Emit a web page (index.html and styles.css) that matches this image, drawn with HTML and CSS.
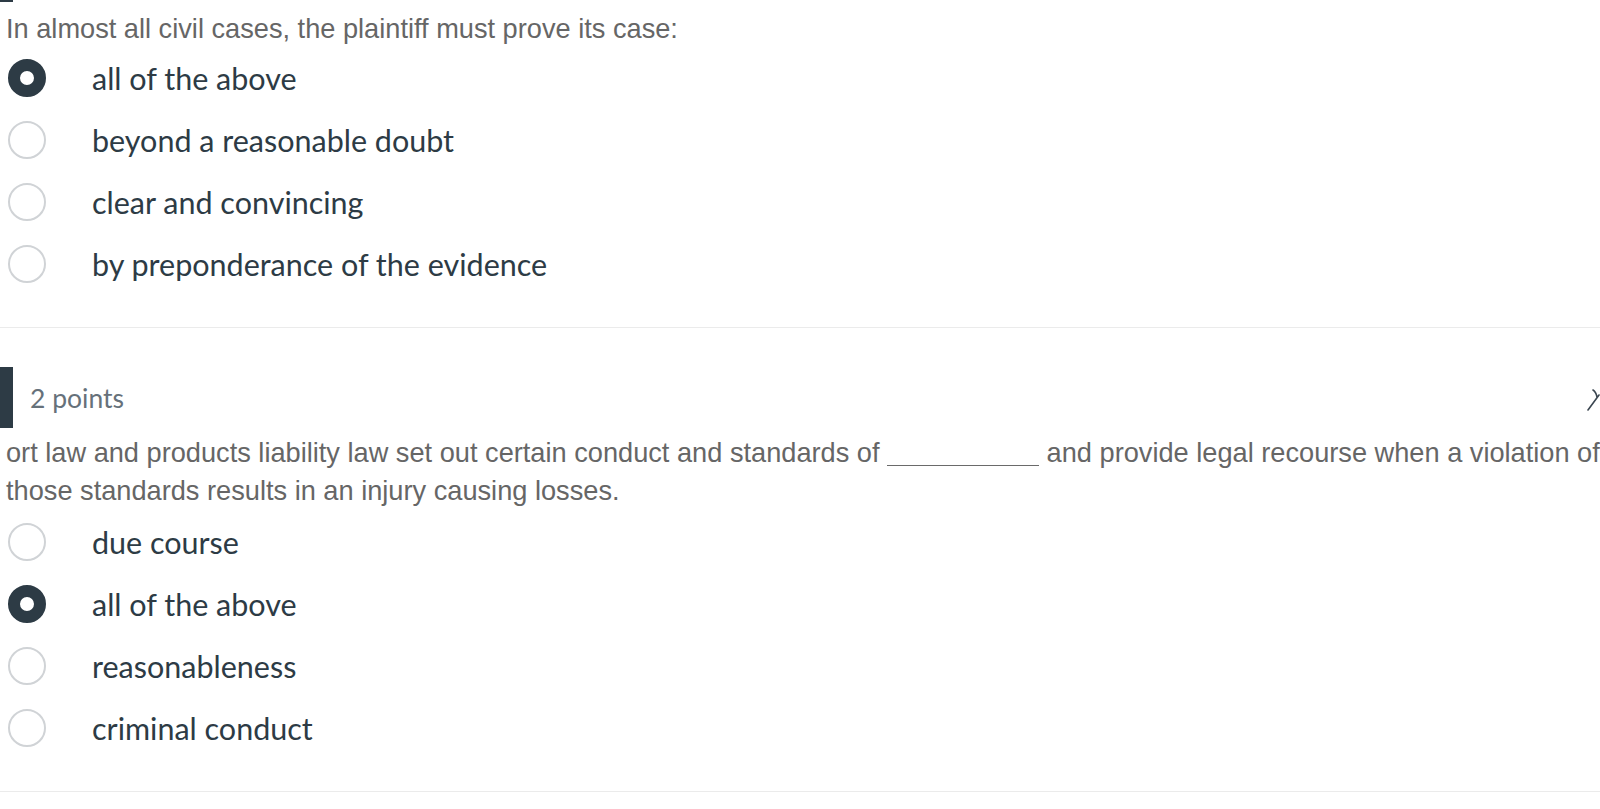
FILE: index.html
```html
<!DOCTYPE html>
<html lang="en">
<head>
<meta charset="utf-8">
<title>Quiz</title>
<link rel="stylesheet" href="styles.css">
</head>
<body>
<div class="prev-marker"></div>

<section class="question">
  <p class="q-text">In almost all civil cases, the plaintiff must prove its case:</p>
  <ul class="options">
    <li class="option is-selected"><span class="radio"></span><span class="label">all of the above</span></li>
    <li class="option"><span class="radio"></span><span class="label">beyond a reasonable doubt</span></li>
    <li class="option"><span class="radio"></span><span class="label">clear and convincing</span></li>
    <li class="option"><span class="radio"></span><span class="label">by preponderance of the evidence</span></li>
  </ul>
</section>

<hr class="divider">

<section class="question">
  <header class="q-header">
    <span class="marker"></span>
    <span class="points">2 points</span>
    <svg class="pin" width="20" height="26" viewBox="0 0 20 26" aria-hidden="true">
      <path d="M8 3 Q11 5 12 10 M14 8 L3 23" fill="none" stroke="#3b4650" stroke-width="1.6" stroke-linecap="round"/>
    </svg>
  </header>
  <p class="q-text q-text-2">ort law and products liability law set out certain conduct and standards of <span class="blank"></span> and provide legal recourse when a violation of<br>those standards results in an injury causing losses.</p>
  <ul class="options options-2">
    <li class="option"><span class="radio"></span><span class="label">due course</span></li>
    <li class="option is-selected"><span class="radio"></span><span class="label">all of the above</span></li>
    <li class="option"><span class="radio"></span><span class="label">reasonableness</span></li>
    <li class="option"><span class="radio"></span><span class="label">criminal conduct</span></li>
  </ul>
</section>

<hr class="divider divider-last">
</body>
</html>
```

FILE: styles.css
```css
html, body {
  margin: 0;
  padding: 0;
  background: #ffffff;
  overflow: hidden;
}

body {
  width: 1600px;
  height: 809px;
  font-family: "Liberation Sans", Arial, sans-serif;
}

.prev-marker {
  width: 13px;
  height: 2px;
  background: #2d3b45;
}

.question {
  position: relative;
}

.q-text {
  margin: 8px 0 0 0;
  padding-left: 6px;
  font-family: "Liberation Sans", Arial, sans-serif;
  font-size: 27.2px;
  line-height: 37px;
  color: #666666;
  white-space: nowrap;
}

.q-text-2 {
  margin-top: 6px;
  line-height: 38px;
}

.blank {
  display: inline-block;
  width: 152px;
  height: 1px;
  border-bottom: 1.5px solid #6a6a6a;
  vertical-align: -4px;
}

.options {
  list-style: none;
  margin: 0;
  padding: 0;
}

.options-2 {
  margin-top: 1px;
}

.option {
  display: flex;
  align-items: center;
  height: 62px;
}

.radio {
  box-sizing: border-box;
  flex: none;
  width: 38px;
  height: 38px;
  margin-left: 8px;
  border-radius: 50%;
  border: 2px solid #d0d3d6;
  background: #ffffff;
}

.is-selected .radio {
  border: 12px solid #2d3b45;
}

.label {
  margin-left: 46px;
  font-family: Lato, "Liberation Sans", sans-serif;
  font-size: 30.5px;
  color: #2d3b45;
  white-space: nowrap;
}

.divider {
  margin: 32px 0 0 0;
  border: 0;
  height: 1px;
  background: #ebebeb;
}

.divider-last {
  margin-top: 32px;
}

.q-header {
  display: flex;
  align-items: center;
  height: 61px;
  margin-top: 39px;
  position: relative;
}

.marker {
  flex: none;
  width: 13px;
  height: 61px;
  background: #2d3b45;
}

.points {
  margin-left: 17px;
  font-family: Lato, "Liberation Sans", sans-serif;
  font-size: 26.5px;
  color: #66717a;
}

.pin {
  position: absolute;
  left: 1585px;
  top: 20px;
}
```
